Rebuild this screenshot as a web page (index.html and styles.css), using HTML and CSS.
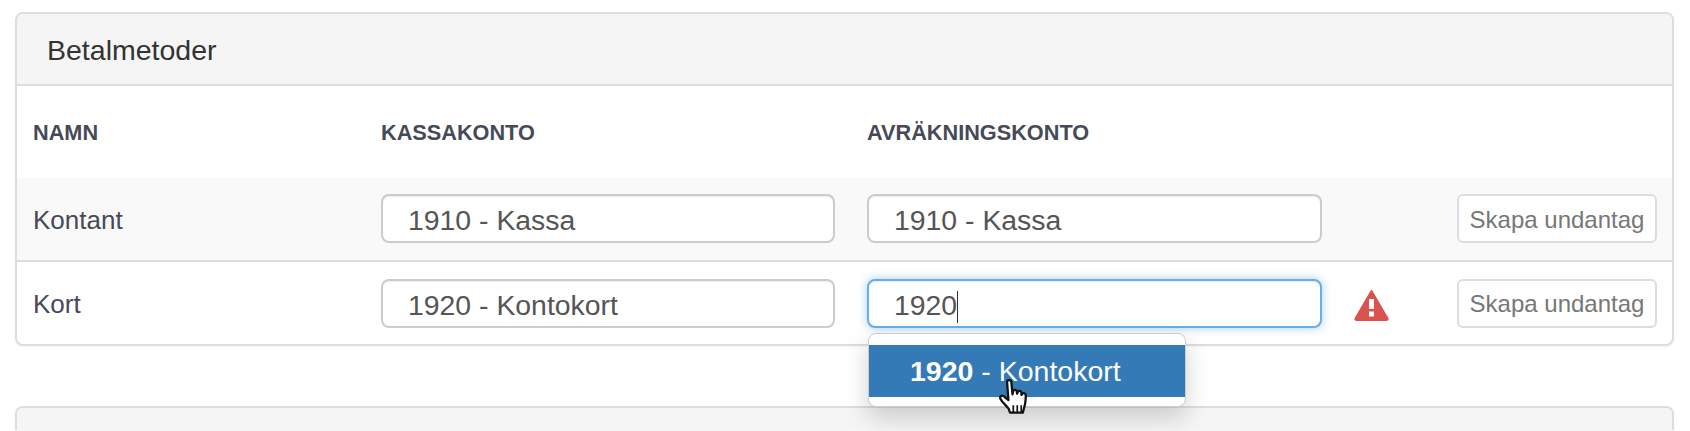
FILE: index.html
```html
<!DOCTYPE html>
<html lang="en">
<head>
    <meta charset="UTF-8">
    <meta name="viewport" content="width=device-width, initial-scale=1.0">
    <title>Betalmetoder</title>
    <link rel="stylesheet" href="styles.css">
</head>
<body>

    <div class="panel">
        <div class="panel-heading">Betalmetoder</div>
        <div class="row row-head">
            <div>NAMN</div>
            <div>KASSAKONTO</div>
            <div>AVRÄKNINGSKONTO</div>
        </div>
        <div class="row row-striped">
            <div class="name">Kontant</div>
            <div class="field">1910 - Kassa</div>
            <div class="field">1910 - Kassa</div>
            <div></div>
            <button class="btn" type="button">Skapa undantag</button>
        </div>
        <div class="row">
            <div class="name">Kort</div>
            <div class="field">1920 - Kontokort</div>
            <div class="field-wrap">
                <div class="field field-focus">1920<span class="caret"></span></div>
                <div class="dropdown">
                    <div class="dropdown-item"><b>1920</b> - Kontokort</div>
                </div>
                <!-- hand pointer -->
                <svg class="pointer" viewBox="0 0 30 36" width="34" height="41">
                    <path d="M8 2.5c0-2 3.6-2 3.8 0l1 11 .6-3c.5-1.6 3-1.4 3.2.4l.2 2 .6-1.5c.7-1.5 3-1.2 3.2.6l.1 2 .8-1c1-1.100 3-.4 3 1.300 0 4-.5 8.500-1.700 11.700l-.8 3.500H10.500l-1-3.200C7.500 23.500 4 21 2.200 17.500c-1-2 1-3.700 2.800-2.500l4.200 3.500z" fill="#fff" stroke="#111" stroke-width="2" stroke-linejoin="round"/>
                    <path d="M13.500 23v7M17 23v7M20.500 23v7" stroke="#111" stroke-width="1.500" fill="none"/>
                </svg>
            </div>
            <svg class="warn" viewBox="0 0 35 32" width="35" height="32">
                <path d="M17.500 2 33.500 29.500a1 1 0 0 1-1 1.500H2.500a1 1 0 0 1-1-1.500z" fill="#d9534f" stroke="#d9534f" stroke-width="2" stroke-linejoin="round"/>
                <rect x="15" y="10" width="5" height="10" fill="#fff"/>
                <rect x="15" y="22.500" width="5" height="5" fill="#fff"/>
            </svg>
            <button class="btn" type="button">Skapa undantag</button>
        </div>
    </div>

    <div class="panel panel-next">
        <div class="panel-heading"></div>
    </div>

</body>
</html>
```

FILE: styles.css
```css
html, body {
    height: 100%;
    overflow: hidden;
}
body {
    font-family: "Liberation Sans", Arial, sans-serif;
    font-size: 26px;
    color: #454a56;
    margin: 0;
    padding: 12px 16px 0 15px;
    box-sizing: border-box;
    background-color: #fff;
}
.panel {
    border: 2px solid #ddd;
    border-radius: 8px;
    background-color: #fff;
    box-shadow: 0 1px 2px rgba(0, 0, 0, 0.05);
}
.panel-heading {
    height: 70px;
    line-height: 72px;
    padding-left: 30px;
    font-size: 28.5px;
    color: #333;
    background-color: #f5f5f5;
    border-bottom: 2px solid #ddd;
    border-radius: 6px 6px 0 0;
}
.panel-next {
    margin-top: 60px;
    border-bottom: 0;
    border-radius: 8px 8px 0 0;
}
.panel-next .panel-heading {
    height: 22px;
    border-bottom: 0;
}
.row {
    display: grid;
    grid-template-columns: 316px 454px 455px 1fr 200px;
    column-gap: 32px;
    align-items: center;
    height: 82px;
    padding: 0 15px 0 16px;
}
.row-head {
    height: 90px;
    padding-top: 2px;
    font-size: 21.7px;
    font-weight: bold;
}
.row-striped {
    height: 81px;
    padding-bottom: 1px;
    background-color: #f9f9f9;
    border-bottom: 2px solid #ddd;
}
.name {
    padding-top: 3px;
}
.field {
    height: 49px;
    line-height: 48px;
    padding-left: 25px;
    box-sizing: border-box;
    font-size: 28.4px;
    color: #555;
    background-color: #fff;
    border: 2px solid #ccc;
    border-radius: 8px;
    box-shadow: inset 0 1px 1px rgba(0, 0, 0, 0.075);
}
.field-wrap {
    position: relative;
}
.field-focus {
    border-color: #66afe9;
    box-shadow: inset 0 1px 1px rgba(0, 0, 0, 0.075), 0 0 10px rgba(102, 175, 233, 0.6);
}
.caret {
    display: inline-block;
    width: 1px;
    height: 32px;
    vertical-align: middle;
    background-color: #333;
}
.dropdown {
    position: absolute;
    top: 54px;
    left: 1px;
    width: 318px;
    box-sizing: border-box;
    padding: 11px 0 9px;
    background-color: #fff;
    border: 1px solid #ccc;
    border-radius: 8px;
    box-shadow: 0 10px 24px rgba(0, 0, 0, 0.18);
}
.dropdown-item {
    height: 52px;
    line-height: 52px;
    padding-left: 41px;
    font-size: 28.5px;
    color: #fff;
    background-color: #337ab7;
}
.pointer {
    position: absolute;
    top: 100px;
    left: 131px;
}
.warn {
    justify-self: start;
    margin-top: 3px;
}
.btn {
    height: 49px;
    padding: 2px 0 0;
    font-family: inherit;
    font-size: 24px;
    color: #777;
    background-color: #fff;
    border: 2px solid #ddd;
    border-radius: 6px;
}
```
